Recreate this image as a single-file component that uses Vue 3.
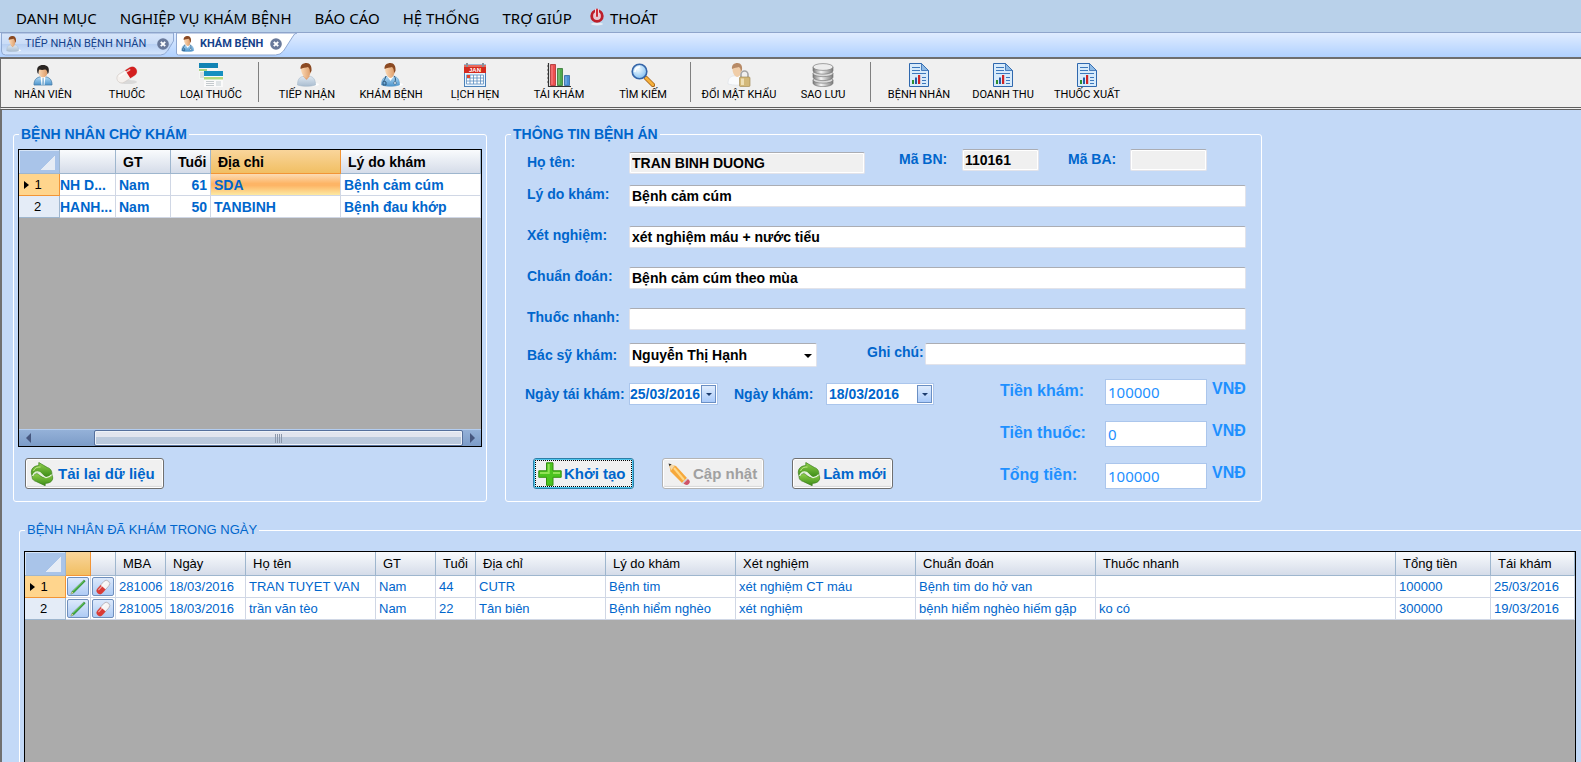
<script setup>
import { ref } from 'vue'

const menus = ['DANH MỤC', 'NGHIỆP VỤ KHÁM BỆNH', 'BÁO CÁO', 'HỆ THỐNG', 'TRỢ GIÚP']

const toolGroups = [
  [
    { icon: 'staff', label: 'NHÂN VIÊN' },
    { icon: 'pill', label: 'THUỐC' },
    { icon: 'windows', label: 'LOẠI THUỐC' },
  ],
  [
    { icon: 'patient', label: 'TIẾP NHẬN' },
    { icon: 'doctor', label: 'KHÁM BỆNH' },
    { icon: 'calendar', label: 'LỊCH HẸN', mark: 'JAN' },
    { icon: 'bars', label: 'TÁI KHÁM' },
    { icon: 'search', label: 'TÌM KIẾM' },
  ],
  [
    { icon: 'lock', label: 'ĐỔI MẬT KHẨU' },
    { icon: 'database', label: 'SAO LƯU' },
  ],
  [
    { icon: 'report', label: 'BỆNH NHÂN' },
    { icon: 'report', label: 'DOANH THU' },
    { icon: 'report', label: 'THUỐC XUẤT' },
  ],
]

const waitingWidths = [41, 56, 55, 40, 130, 140]
const waiting = [
  { name: 'NH D...', sex: 'Nam', age: 61, address: 'SDA', reason: 'Bệnh cảm cúm' },
  { name: 'HANH...', sex: 'Nam', age: 50, address: 'TANBINH', reason: 'Bệnh đau khớp' },
]

const doneWidths = [41, 25, 25, 50, 80, 130, 60, 40, 130, 130, 180, 180, 300, 95, 84]
const doneHeads = ['MBA', 'Ngày', 'Họ tên', 'GT', 'Tuổi', 'Địa chỉ', 'Lý do khám', 'Xét nghiệm', 'Chuẩn đoán', 'Thuốc nhanh', 'Tổng tiền', 'Tái khám']
const done = [
  ['281006', '18/03/2016', 'TRAN TUYET VAN', 'Nam', '44', 'CUTR', 'Bệnh tim', 'xét nghiệm CT máu', 'Bệnh tim do hở van', '', '100000', '25/03/2016'],
  ['281005', '18/03/2016', 'trần văn tèo', 'Nam', '22', 'Tân biên', 'Bệnh hiểm nghèo', 'xét nghiệm', 'bệnh hiểm nghèo hiếm gặp', 'ko có', '300000', '19/03/2016'],
]

const form = ref({
  name: 'TRAN BINH DUONG',
  patientId: '110161',
  recordId: '',
  reason: 'Bệnh cảm cúm',
  test: 'xét nghiệm máu + nước tiểu',
  diagnosis: 'Bệnh cảm cúm theo mùa',
  quick: '',
  doctor: 'Nguyễn Thị Hạnh',
  note: '',
  revisit: '25/03/2016',
  visit: '18/03/2016',
})

const longFields = [
  { key: 'reason', label: 'Lý do khám:' },
  { key: 'test', label: 'Xét nghiệm:' },
  { key: 'diagnosis', label: 'Chuẩn đoán:' },
  { key: 'quick', label: 'Thuốc nhanh:' },
]

const fees = ref([
  { key: 'exam', label: 'Tiền khám:', value: '100000' },
  { key: 'drug', label: 'Tiền thuốc:', value: '0' },
  { key: 'total', label: 'Tổng tiền:', value: '100000' },
])
</script>

<template>
  <div class="app">
    <svg class="sprite" aria-hidden="true">
      <defs>
        <linearGradient id="g-shirt" x1="0" y1="0" x2="0" y2="1"><stop offset="0" stop-color="#b4dcf6" /><stop offset="1" stop-color="#4c94cc" /></linearGradient>
        <linearGradient id="g-grey" x1="0" y1="0" x2="0" y2="1"><stop offset="0" stop-color="#dfe9f3" /><stop offset="1" stop-color="#a9bccf" /></linearGradient>
        <linearGradient id="g-skin" x1="0" y1="0" x2="1" y2="0"><stop offset="0" stop-color="#fbd9b5" /><stop offset="1" stop-color="#dc9a66" /></linearGradient>
        <linearGradient id="g-green" x1="0" y1="0" x2="0" y2="1"><stop offset="0" stop-color="#8fd04a" /><stop offset="1" stop-color="#3c8c18" /></linearGradient>
        <linearGradient id="g-disk" x1="0" y1="0" x2="1" y2="0"><stop offset="0" stop-color="#777" /><stop offset=".4" stop-color="#f4f4f4" /><stop offset="1" stop-color="#7b7b7b" /></linearGradient>
        <linearGradient id="g-tab" x1="0" y1="0" x2="0" y2="1"><stop offset="0" stop-color="#d9e6fa" /><stop offset=".5" stop-color="#c9dcf7" /><stop offset=".52" stop-color="#b8d0f3" /><stop offset="1" stop-color="#d6e6fc" /></linearGradient>
        <radialGradient id="g-lens" cx=".4" cy=".35" r=".7"><stop offset="0" stop-color="#f2fbff" /><stop offset="1" stop-color="#7fbdf0" /></radialGradient>
      </defs>
      <symbol id="i-staff" viewBox="0 0 24 24">
        <path d="M3 22c0-5 2-7 5.500-8h7c3.500 1 5.500 3 5.500 8z" fill="url(#g-shirt)" stroke="#4a7ea8" stroke-width=".8" />
        <path d="M9.500 13h5l-1 9h-3z" fill="#fff" /><path d="M11.500 15h1.200l.5 7h-2.200z" fill="#8bb6d6" />
        <ellipse cx="12" cy="9" rx="4.600" ry="5.400" fill="url(#g-skin)" />
        <path d="M6.500 10C5 4 8 2 12 2s7 2 5.500 8l-1 1c0-3-1-4.500-2.500-4.500-2 .6-4 .6-5.500 0-1 1-1 2.500-1 4.500z" fill="#2a2523" />
      </symbol>
      <symbol id="i-pill" viewBox="0 0 24 24">
        <ellipse cx="13" cy="19" rx="9" ry="2" fill="#c9c9c9" opacity=".6" />
        <g transform="rotate(-32 12 12)">
          <rect x="1" y="7" width="22" height="9.600" rx="4.800" fill="#f5f1ee" stroke="#ccc4be" stroke-width=".5" />
          <path d="M13 7h5.200a4.800 4.800 0 0 1 0 9.600H13z" fill="#d31f1f" />
          <path d="M5 9h12" stroke="#fff" stroke-width="1.600" opacity=".7" stroke-linecap="round" />
        </g>
      </symbol>
      <symbol id="i-windows" viewBox="0 0 24 24">
        <path d="M0 0h19v16H0z" fill="#f4f6f4" /><path d="M0 0h19v5H0z" fill="#1183b4" />
        <path d="M0 6h8v2H0z" fill="#aed581" /><path d="M1 10h5m-5 2h5m-5 2h5" stroke="#c3c9cc" />
        <path d="M5 8h19v16H5z" fill="#fafafa" /><path d="M5 8h19v5H5z" fill="#158fc0" /><path d="M5 14h19v2.500H5z" fill="#b5da7e" />
        <path d="M7 18.500h8m-8 2h8m-8 2h8" stroke="#c3c9cc" /><path d="M17 18h5v5h-5z" fill="#dfe4e6" />
      </symbol>
      <symbol id="i-patient" viewBox="0 0 24 24">
        <ellipse cx="16" cy="21.500" rx="8" ry="1.800" fill="#fff" opacity=".9" />
        <path d="M2.500 22c0-5 1.500-7.500 5-8.500l7-.500c4 1 6 3.500 6 9-5 1.800-13 1.800-18 0z" fill="url(#g-grey)" stroke="#9fb2c4" stroke-width=".5" />
        <path d="M8 13l3.500 4 3.500-4z" fill="#e2a577" />
        <path d="M6 6c0-3 2-5 5-5s5.500 2 5 6-2 8-4.500 8S6 10 6 6z" fill="url(#g-skin)" />
        <path d="M5.600 6C5 2 8 0 11.500 0S17 3 16.500 8l-1.500 2c0-3-.5-5-2-6-2.500.800-5 .500-7.400 2z" fill="#8b4a23" />
      </symbol>
      <symbol id="i-doctor" viewBox="0 0 24 24">
        <ellipse cx="16" cy="21.500" rx="8" ry="1.800" fill="#fff" opacity=".9" />
        <path d="M2.500 22c0-5 1.500-7.500 5-8.500l7-.500c4 1 6 3.500 6 9-5 1.800-13 1.800-18 0z" fill="url(#g-shirt)" stroke="#4b90c4" stroke-width=".5" />
        <path d="M8 13l3.500 5 3.500-5z" fill="#fff" />
        <path d="M6 6c0-3 2-5 5-5s5.500 2 5 6-2 8-4.500 8S6 10 6 6z" fill="url(#g-skin)" />
        <path d="M5.600 6C5 2 8 0 11.500 0S17 3 16.500 8l-1.500 2c0-3-.5-5-2-6-2.500.800-5 .500-7.400 2z" fill="#8b4a23" />
        <path d="M7 13c-1 3-1.500 4-3 6v3h3v-3l-2-1M15 13c2 2 1.500 4 1 6" fill="none" stroke="#2c5578" stroke-width="1" />
        <circle cx="16" cy="20" r="1.400" fill="#e8f2f8" stroke="#2c5578" stroke-width=".6" />
      </symbol>
      <symbol id="i-calendar" viewBox="0 0 24 24">
        <rect x="1.500" y="2" width="21" height="21.500" fill="#eaf4fd" stroke="#4a80b8" />
        <path d="M1 2h22v8H1z" fill="#d52b1e" /><path d="M1 2h22v2H1z" fill="#e9695c" />
        <path d="M4 0v4M20 0v4" stroke="#8b8f94" stroke-width="2" />
        <path d="M3.500 12h17v9h-17zM3.500 15h17M3.500 18h17M7 12v9M10.500 12v9M14 12v9M17.500 12v9" fill="#fff" stroke="#5b8dc0" stroke-width=".8" />
        <path d="M4 12h3v3H4z" fill="#e2442c" />
      </symbol>
      <symbol id="i-bars" viewBox="0 0 24 24">
        <path d="M1.500 0v23.500H24" fill="none" stroke="#333" stroke-width="1.200" /><path d="M0 3h2M0 7h2M0 11h2M0 15h2M0 19h2" stroke="#333" stroke-width=".8" />
        <path d="M3.500 1.500h5v21h-5z" fill="#ee4f4f" stroke="#a32020" stroke-width=".7" /><path d="M10.500 5.500h5v17h-5z" fill="#4fa84c" stroke="#246a24" stroke-width=".7" /><path d="M17.500 12.500h5v10h-5z" fill="#4a8fd6" stroke="#205a9a" stroke-width=".7" />
        <path d="M5 2.500v19M12 6.500v15M19 13.500v8" stroke="#fff" opacity=".35" />
      </symbol>
      <symbol id="i-search" viewBox="0 0 24 24">
        <path d="M15 15l7 7" stroke="#a8661a" stroke-width="4.400" stroke-linecap="round" /><path d="M15 15l6.800 6.800" stroke="#f6b13c" stroke-width="2.800" stroke-linecap="round" />
        <circle cx="8.500" cy="8.500" r="7.300" fill="url(#g-lens)" stroke="#3565a8" stroke-width="1.600" />
        <path d="M4 8.500c.3-2.500 2-4.200 4.500-4.500" fill="none" stroke="#fff" stroke-width="1.600" stroke-linecap="round" />
      </symbol>
      <symbol id="i-lock" viewBox="0 0 24 24">
        <path d="M1 21c0-5 1.500-7 5-8l7-.500c3 1 5 3.500 5 8.500-4 1.500-12 1.500-17 0z" fill="#fafbfd" stroke="#d4dbe2" stroke-width=".5" />
        <path d="M5.500 6c0-3 2-5 4.500-5s5 2 4.500 6-2 7-4.300 7S5.500 10 5.500 6z" fill="#f0cda8" />
        <path d="M5 6C4.500 2 7 0 10.500 0s5 3 4.500 7l-1.200 2c0-3-.5-4-2-5-2 .8-4.500.5-6.800 2z" fill="#b78a66" />
        <path d="M14 15v-3.500a3.500 3.500 0 0 1 7 0V15" fill="none" stroke="#a5a5a5" stroke-width="1.600" />
        <rect x="12.500" y="14" width="10.500" height="9.500" rx="1" fill="#d3b878" stroke="#9c8248" stroke-width=".6" /><path d="M14 15.500h3v6.500h-3z" fill="#efdfb4" />
      </symbol>
      <symbol id="i-database" viewBox="0 0 24 24">
        <g stroke="#6d6d6d" stroke-width=".6">
          <path d="M2 17v3c0 2 4.500 3.600 10 3.600s10-1.600 10-3.600v-3z" fill="url(#g-disk)" /><ellipse cx="12" cy="17" rx="10" ry="3.200" fill="#d9d9d9" />
          <path d="M2 10.500v3.500c0 2 4.500 3.600 10 3.600s10-1.600 10-3.600v-3.500z" fill="url(#g-disk)" /><ellipse cx="12" cy="10.500" rx="10" ry="3.200" fill="#d9d9d9" />
          <path d="M2 4v3.500c0 2 4.500 3.600 10 3.600s10-1.600 10-3.600V4z" fill="url(#g-disk)" /><ellipse cx="12" cy="4" rx="10" ry="3.400" fill="#ececec" />
        </g>
      </symbol>
      <symbol id="i-report" viewBox="0 0 24 24">
        <path d="M2.500.5h12l7 7v16h-19z" fill="#d8ebfb" stroke="#2f68ae" /><path d="M14.500.5v7h7z" fill="#8fbbe6" stroke="#2f68ae" stroke-width=".8" />
        <path d="M5 4.500h8M5 7.500h8M5 10.500h14M15 14.500h4M15 17.500h4M15 20.500h4" stroke="#3d78bc" stroke-width="1.200" />
        <path d="M5 17h2v4H5z" fill="#2f8f2f" /><path d="M8 14.500h2V21H8z" fill="#2559a8" /><path d="M11 12h2.200v9H11z" fill="#d02323" />
      </symbol>
      <symbol id="i-power" viewBox="0 0 16 18">
        <ellipse cx="8" cy="16" rx="6" ry="1.500" fill="#fff" opacity=".6" />
        <circle cx="8" cy="8" r="5.300" fill="#e6c9d4" stroke="#bd1f2b" stroke-width="2.800" /><path d="M8 1v7" stroke="#f0d4dc" stroke-width="4" /><path d="M8 1.500v6.500" stroke="#cf2a35" stroke-width="2" stroke-linecap="round" />
      </symbol>
      <symbol id="i-refresh" viewBox="0 0 24 24">
        <g fill="url(#g-green)" stroke="#3a7d1a" stroke-width=".7">
          <path d="M2.200 14.500C-.3 8.500 2.500 3.800 8.800 3.600V.5l8.600 5c3.400 1 5 4 4.300 7.500-3 2.600-5.500 2.600-8 .2-2.200-2.200-4.400-4-7-3.200C4.400 10.700 3.200 12.500 2.200 14.500z" />
          <path d="M21.800 12.500c2.500 5-.3 8.700-6.600 8.900v2.300l-8.600-4c-3.400-1-5-3-4.300-5.500 3-2.600 4.500-3.600 7-1.200 2.200 2.200 4.400 3 7 2.200 2.300-.7 4.500-1.200 5.500-2.700z" />
        </g>
        <path d="M2.500 14c2-4 4.500-5 7-3.600s3.500 5.200 6.500 5.200 4.500-1.600 5.700-3" fill="none" stroke="#e8f6da" stroke-width="1.300" />
        <path d="M3.500 9c1-3 3.500-4.200 7-4" fill="none" stroke="#d3f09c" opacity=".8" />
      </symbol>
      <symbol id="i-plus" viewBox="0 0 24 24">
        <path d="M8.500.800h6.500v8h8.200v6.500H15v8H8.500v-8H.800V8.800h7.700z" fill="#4cc41e" stroke="#35910f" /><path d="M9.700 2v8.100H2v2h9.700V2zM15 10.100h7v2h-7z" fill="#a8ec6a" opacity=".75" />
      </symbol>
      <symbol id="i-edit" viewBox="0 0 24 24">
        <path d="M2 2l7 2 11 12-5 5L3.500 9.500z" fill="#f6a83c" /><path d="M2 2l6 1.600L4 8.500z" fill="#f4d8a8" /><path d="M1.500 1.500l3 .8-2 2z" fill="#333" />
        <path d="M7 6l10 12" stroke="#ffd887" stroke-width="2" /><path d="M15 21l5-5 1 1-5 5z" fill="#cfd3d8" /><path d="M16.500 21.500l4.500-4.500c2 1.500 2.500 3 1 4.700s-3.800 1.500-5.500-.2z" fill="#cf5568" />
      </symbol>
      <symbol id="i-pencil" viewBox="0 0 18 18">
        <path d="M1 17l1.300-3L15.800 1l1.400 1.400L4 15.800z" fill="#37a637" stroke="#1c6b22" stroke-width=".5" /><path d="M1 17l1.300-3L4 15.800z" fill="#ead0a0" /><path d="M3.500 13.500L15.500 2" stroke="#a4e28d" stroke-width=".7" />
      </symbol>
      <symbol id="i-capsule" viewBox="0 0 18 18">
        <g transform="rotate(-48 9 9)"><rect x="0" y="5.500" width="18" height="7.500" rx="3.700" fill="#f7f5f5" stroke="#9a8f95" stroke-width=".6" /><path d="M9 5.500H3.700a3.700 3.700 0 0 0 0 7.500H9z" fill="#d93a36" /><path d="M3 7.500h12" stroke="#fff" opacity=".6" stroke-width="1.200" /></g>
      </symbol>
      <symbol id="i-close" viewBox="0 0 12 12"><circle cx="6" cy="6" r="5.800" fill="#69799a" /><path d="M3.800 3.800l4.400 4.400M8.200 3.800L3.800 8.200" stroke="#fff" stroke-width="1.900" /></symbol>
    </svg>

    <nav class="menu">
      <button v-for="m in menus" :key="m" type="button">{{ m }}</button>
      <button type="button" class="exit"><svg><use href="#i-power" /></svg>THOÁT</button>
    </nav>

    <div class="tabs">
      <div class="tab">
        <svg class="shape" viewBox="0 0 174 23" preserveAspectRatio="none"><path d="M.5 0v18q0 4 4 4h156q4 0 7-4l6-10V0z" fill="url(#g-tab)" stroke="#8fa8d2" /></svg>
        <svg class="who"><use href="#i-patient" /></svg>
        <button type="button">TIẾP NHẬN BỆNH NHÂN</button>
        <button type="button" class="x" aria-label="Đóng"><svg><use href="#i-close" /></svg></button>
      </div>
      <div class="tab active">
        <svg class="shape" viewBox="0 0 121 23" preserveAspectRatio="none"><path d="M.5 0v20q0 2 2 2h97q5 0 8-4l9-14q2-4 4.500-4z" fill="#fff" stroke="#8fa8d2" /></svg>
        <svg class="who"><use href="#i-doctor" /></svg>
        <button type="button">KHÁM BỆNH</button>
        <button type="button" class="x" aria-label="Đóng"><svg><use href="#i-close" /></svg></button>
      </div>
    </div>

    <div class="toolbar">
      <div v-for="(g, i) in toolGroups" :key="i" class="tools">
        <button v-for="t in g" :key="t.label" type="button">
          <svg><use :href="'#i-' + t.icon" /><text v-if="t.mark" x="12" y="9" text-anchor="middle" class="mark">{{ t.mark }}</text></svg>
          <span>{{ t.label }}</span>
        </button>
      </div>
    </div>

    <main>
      <div class="top">
        <fieldset class="box waiting">
          <legend>BỆNH NHÂN CHỜ KHÁM</legend>
          <div class="sheet">
            <table class="bold">
              <colgroup><col v-for="(w, i) in waitingWidths" :key="i" :style="{ width: w + 'px' }"></colgroup>
              <thead><tr><th class="corner"></th><th></th><th>GT</th><th>Tuổi</th><th class="hot">Địa chỉ</th><th>Lý do khám</th></tr></thead>
              <tbody>
                <tr v-for="(r, i) in waiting" :key="i" :class="{ current: i === 0 }">
                  <th class="num" scope="row">{{ i + 1 }}</th>
                  <td class="cut">{{ r.name }}</td><td>{{ r.sex }}</td><td class="right">{{ r.age }}</td><td :class="{ picked: i === 0 }">{{ r.address }}</td><td>{{ r.reason }}</td>
                </tr>
              </tbody>
            </table>
            <div class="scroll">
              <button type="button" class="arrow prev" aria-label="Sang trái"></button>
              <span class="thumb"><i></i></span>
              <button type="button" class="arrow next" aria-label="Sang phải"></button>
            </div>
          </div>
          <button type="button" class="cmd reload"><svg><use href="#i-refresh" /></svg>Tải lại dữ liệu</button>
        </fieldset>

        <fieldset class="box record">
          <legend>THÔNG TIN BỆNH ÁN</legend>
          <div class="rows">
            <div class="row head">
              <label for="name" class="low">Họ tên:</label><input id="name" v-model="form.name" class="txt name low" readonly>
              <label for="pid" class="pid">Mã BN:</label><input id="pid" v-model="form.patientId" class="txt code" readonly>
              <label for="rid" class="rid">Mã BA:</label><input id="rid" v-model="form.recordId" class="txt code" readonly>
            </div>
            <div v-for="f in longFields" :key="f.key" class="row long">
              <label :for="f.key">{{ f.label }}</label><input :id="f.key" v-model="form[f.key]" class="txt grow">
            </div>
            <div class="row">
              <label for="doctor" class="tall">Bác sỹ khám:</label>
              <span class="pick"><select id="doctor" v-model="form.doctor"><option>Nguyễn Thị Hạnh</option></select></span>
              <label for="note" class="note">Ghi chú:</label><input id="note" v-model="form.note" class="txt grow">
            </div>
          </div>
          <div class="lower">
            <div class="left">
              <div class="dates">
                <label for="revisit">Ngày tái khám:</label>
                <span class="date short"><input id="revisit" v-model="form.revisit"><button type="button" aria-label="Chọn ngày tái khám"></button></span>
                <label for="visit" class="second">Ngày khám:</label>
                <span class="date"><input id="visit" v-model="form.visit"><button type="button" aria-label="Chọn ngày khám"></button></span>
              </div>
              <div class="cmds">
                <button type="button" class="cmd focus"><svg><use href="#i-plus" /></svg>Khởi tạo</button>
                <button type="button" class="cmd" disabled><svg><use href="#i-edit" /></svg>Cập nhật</button>
                <button type="button" class="cmd"><svg><use href="#i-refresh" /></svg>Làm mới</button>
              </div>
            </div>
            <div class="fees">
              <div v-for="f in fees" :key="f.key" class="fee">
                <label :for="f.key">{{ f.label }}</label><input :id="f.key" v-model="f.value"><span>VNĐ</span>
              </div>
            </div>
          </div>
        </fieldset>
      </div>

      <fieldset class="box done">
        <legend>BỆNH NHÂN ĐÃ KHÁM TRONG NGÀY</legend>
        <div class="sheet">
          <table>
            <colgroup><col v-for="(w, i) in doneWidths" :key="i" :style="{ width: w + 'px' }"></colgroup>
            <thead><tr><th class="corner"></th><th class="hot"></th><th></th><th v-for="h in doneHeads" :key="h">{{ h }}</th></tr></thead>
            <tbody>
              <tr v-for="(r, i) in done" :key="i" :class="{ current: i === 0 }">
                <th class="num" scope="row">{{ i + 1 }}</th>
                <td class="act"><button type="button" aria-label="Sửa"><svg><use href="#i-pencil" /></svg></button></td>
                <td class="act"><button type="button" aria-label="Thuốc"><svg><use href="#i-capsule" /></svg></button></td>
                <td v-for="(c, j) in r" :key="j">{{ c }}</td>
              </tr>
            </tbody>
          </table>
        </div>
      </fieldset>
    </main>
  </div>
</template>

<style>
body { margin: 0; }
</style>

<style scoped>
.app { display: flex; flex-direction: column; height: 100vh; overflow: hidden; background: #c3d9f7; font: 13px/16px "Liberation Sans", Arial, sans-serif; color: #000; }
* { box-sizing: border-box; }
button, input, select { font: inherit; color: inherit; margin: 0; padding: 0; border: 0; background: none; border-radius: 0; outline: 0; }
svg { display: block; flex: none; }
.sprite { position: absolute; width: 0; height: 0; }
.mark { font: bold 6px "Liberation Sans", sans-serif; fill: #fff; }

.menu { display: flex; align-items: center; gap: 23px; height: 33px; flex: none; padding: 4px 16px 0; background: #b9d1ea; border-bottom: 1px solid #8fa5cb; font: 15px/20px "Noto Sans", sans-serif; }
.menu button { white-space: nowrap; }
.exit { display: flex; align-items: center; gap: 5px; margin-left: -6px; }
.exit svg { width: 16px; height: 18px; margin-bottom: 2px; }

.tabs { display: flex; gap: 2px; height: 24px; flex: none; padding-left: 1px; background: linear-gradient(#e0ecff, #b0d1ff); font: 11px/16px Roboto, "Liberation Sans", sans-serif; color: #15428b; }
.tab { position: relative; display: flex; align-items: center; height: 22px; width: 173px; padding-left: 4px; }
.tab.active { width: 121px; font-weight: bold; }
.tab > * { position: relative; }
.tab .shape { position: absolute; left: 0; top: 0; width: 100%; height: 23px; }
.who { width: 16px; height: 16px; margin-right: 4px; }
.tab button { white-space: nowrap; }
.tab .x { margin-left: auto; margin-right: 5px; }
.tab.active .x { margin-right: 15px; }
.x svg { width: 12px; height: 12px; }

.toolbar { display: flex; height: 53px; flex: none; background: #f0f0f0; border-top: 2px solid #6e6e6e; border-bottom: 3px double #5f5f5f; border-left: 1px solid #6e6e6e; }
.tools { display: flex; position: relative; }
.tools + .tools { margin-left: 12px; }
.tools + .tools::before { content: ""; position: absolute; left: -7px; top: 3px; height: 40px; border-left: 1px solid #808080; }
.tools button { display: flex; flex-direction: column; align-items: center; width: 84px; padding-top: 4px; font: 11px/16px Roboto, "Liberation Sans", sans-serif; white-space: nowrap; }
.tools svg { width: 24px; height: 24px; }

main { flex: 1; min-height: 0; display: flex; flex-direction: column; padding: 16px 0 0 11px; border-left: 2px solid #707070; }
.top { display: grid; grid-template-columns: 474fr 757fr 301fr; gap: 18px; flex: none; }
.box { min-width: 0; margin: 0; padding: 7px 4px 12px; border: 1px solid #fff; border-radius: 3px; }
.box legend { margin-left: 1px; padding: 0 2px; font-size: 14px; line-height: 16px; font-weight: bold; color: #0066cc; }

.sheet { display: flex; flex-direction: column; background: #ababab; border: 1px solid #000; }
.waiting .sheet { height: 298px; }
table { width: 100%; table-layout: fixed; border-collapse: separate; border-spacing: 0; line-height: 18px; }
.bold { font-size: 14px; }
thead th { height: 24px; padding: 0 0 0 7px; text-align: left; font-weight: normal; white-space: nowrap; overflow: hidden; background: linear-gradient(#f9fbfd, #d5dce9); border-right: 1px solid #9eb6ce; border-bottom: 1px solid #9eb6ce; }
.bold thead th, .bold td { font-weight: bold; }
thead .hot { background: linear-gradient(#f9d59b, #f1bf63); border-color: #f29536; }
thead .corner { background: linear-gradient(135deg, transparent 50%, #e6ecf5 50%) no-repeat right 4px bottom 3px / 15px 15px, #a9c4e9; box-shadow: inset 1px 1px #d7e5f7; }
.num { height: 22px; padding: 0 3px 0 0; text-align: center; font-size: 13px; font-weight: normal; background: #e4ecf7; border-right: 1px solid #9eb6ce; border-bottom: 1px solid #9eb6ce; }
.current .num { background: #ffd58d; border-color: #f29536; }
.current .num::before { content: ""; display: inline-block; margin: 0 5px 0 -9px; border-left: 5px solid #000; border-top: 4px solid transparent; border-bottom: 4px solid transparent; }
td { height: 22px; padding: 0 3px; color: #0066cc; background: #fff; white-space: nowrap; overflow: hidden; border-right: 1px solid #d0d7e5; border-bottom: 1px solid #d0d7e5; }
.cut { padding: 0; }
.right { text-align: right; }
.picked { background: linear-gradient(#fcdcb5, #fdb566 45%, #fdb566 55%, #fde9a2); }
.act { padding: 1px; }
.act button { display: flex; align-items: center; justify-content: center; width: 100%; height: 19px; border: 1px solid #6f8fbd; border-radius: 2px; background: linear-gradient(#dce9fb, #aecbf5); }
.act svg { width: 16px; height: 16px; }

.scroll { display: flex; height: 17px; margin-top: auto; background: linear-gradient(#94b1d8, #7c9cc8); border-top: 1px solid #b3cdf0; }
.arrow { width: 18px; display: flex; align-items: center; justify-content: center; }
.arrow::before { content: ""; border-top: 5px solid transparent; border-bottom: 5px solid transparent; }
.prev::before { border-right: 5px solid #46567e; }
.next::before { border-left: 5px solid #46567e; }
.thumb { flex: 1; margin-left: 57px; display: flex; align-items: center; justify-content: center; border: 1px solid #56709c; border-radius: 2px; background: linear-gradient(#e2e5ee 40%, #bccadd 40%, #b9c8dc); box-shadow: inset 0 0 0 1px #eef2f8; }
.thumb i { width: 8px; height: 9px; background: repeating-linear-gradient(90deg, #8c98ab 0 1px, transparent 1px 2px); }

.cmd { display: inline-flex; align-items: center; min-width: 101px; height: 31px; padding: 0 6px 0 4px; border: 1px solid #707070; border-radius: 3px; background: #f0f0f0; box-shadow: inset 0 0 0 1px #fff, inset 0 -2px 1px #d9d9d9; font-size: 15px; font-weight: bold; color: #0066cc; white-space: nowrap; }
.cmd svg { width: 24px; height: 24px; margin-right: 2px; }
.cmd.reload { margin: 11px 0 0 7px; width: 139px; display: flex; }
.reload svg { margin-right: 4px; }
.cmd:disabled { color: #a0a0a0; border-color: #b4b4b4; }
.focus { border-color: #2c7fa8; box-shadow: inset 0 0 0 1px #4cc5ee; outline: 1px dotted #000; outline-offset: -3px; }

.record { padding: 7px 15px 12px 21px; font-size: 14px; font-weight: bold; }
.record legend { margin-left: -16px; }
label { color: #0066cc; white-space: nowrap; line-height: 20px; }
.rows { display: grid; grid-template-rows: 36px 41px 41px 41px 35px 36px; }
.row { display: flex; align-items: flex-start; }
.row > label:first-child { width: 102px; flex: none; }
.long label { line-height: 18px; }
.row .tall { line-height: 24px; }
.txt { height: 22px; padding: 0 2px; background: #fff; border: 1px solid #e2e3ea; border-top-color: #abadb3; border-radius: 2px; min-width: 0; }
.txt[readonly] { background: #f0f0f0; box-shadow: inset 0 0 0 1px #fff; }
.grow { flex: 1; }
.low { margin-top: 3px; }
.name { width: 236px; }
.code { width: 77px; }
.pid { margin-left: 34px; width: 63px; }
.rid { margin-left: 29px; width: 62px; }
.pick { position: relative; width: 188px; height: 24px; background: #fff; border: 1px solid #e2e3ea; border-top-color: #abadb3; border-radius: 2px; }
.pick select { width: 100%; height: 100%; padding-left: 2px; appearance: none; }
.pick::after { content: ""; position: absolute; right: 4px; top: 10px; border-top: 4px solid #000; border-left: 4px solid transparent; border-right: 4px solid transparent; pointer-events: none; }
.note { margin-left: 50px; width: 58px; line-height: 18px; }

.lower { display: flex; justify-content: space-between; }
.left { display: flex; flex-direction: column; justify-content: space-between; padding: 4px 0 0; }
.dates { display: flex; align-items: center; margin-left: -2px; }
.dates > label:first-child { width: 104px; flex: none; }
.second { width: 92px; margin-left: 16px; }
.date { display: flex; align-items: center; width: 108px; height: 22px; padding: 0 1px 0 2px; background: #fff; border: 1px solid #abc6ec; color: #0066cc; }
.date.short { width: 89px; padding-left: 0; }
.date input { flex: 1; min-width: 0; }
.date button { display: flex; align-items: center; justify-content: center; width: 15px; height: 18px; border: 1px solid #6a8fc4; background: linear-gradient(#dfecfd, #a9cafa); }
.date button::before { content: ""; border-top: 3px solid #1d3c6e; border-left: 3px solid transparent; border-right: 3px solid transparent; }
.cmds { display: flex; margin-left: 6px; gap: 28px; }
.fees { display: flex; flex-direction: column; gap: 16px; font-size: 16px; color: #1e90ff; }
.fee { display: flex; align-items: flex-start; height: 26px; }
.fee label { width: 105px; color: inherit; line-height: 24px; }
.fee input { width: 102px; height: 26px; padding: 0 2px; background: #fff; border: 1px solid #abc6ec; font: 15px/24px "Noto Sans", sans-serif; }
.fee span { width: 39px; padding-left: 5px; line-height: 20px; }

.done { flex: 1; display: flex; flex-direction: column; margin: 20px -2px 0 6px; padding: 13px 6px 0 4px; border-bottom: 0; border-radius: 3px 0 0; }
.done legend { font-size: 13px; font-weight: normal; }
.done .sheet { flex: 1; border-bottom: 0; }
</style>
